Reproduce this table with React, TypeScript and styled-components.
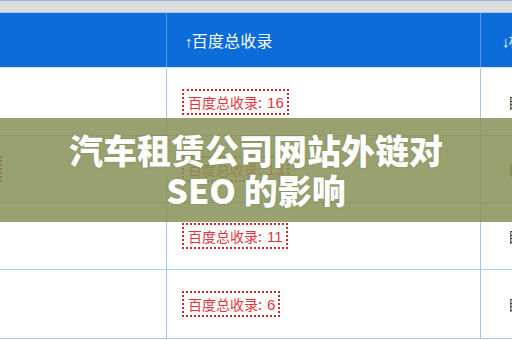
import React from 'react';
import styled, { createGlobalStyle } from 'styled-components';

const GlobalStyle = createGlobalStyle`
  html, body {
    margin: 0;
    padding: 0;
    background: #ffffff;
  }
  body {
    font-family: "Noto Sans CJK SC", "Liberation Sans", sans-serif;
  }
`;

const Page = styled.div`
  position: relative;
  width: 512px;
  height: 340px;
  overflow: hidden;
  background: #ffffff;
`;

const TopBar = styled.div`
  height: 11px;
  background: #dcdcdc;
  border-top: 1px solid #93b1dc;
  border-bottom: 1px solid #a9c8ee;
`;

const Row = styled.div<{ header?: boolean; h: number }>`
  display: flex;
  height: ${({ h }) => h}px;
  box-sizing: border-box;
  background: ${({ header }) => (header ? '#0c6cd9' : '#ffffff')};
  border-bottom: 1px solid ${({ header }) => (header ? '#d3e3f6' : '#a9cbea')};
`;

const Cell = styled.div<{ w: number; header?: boolean; pad?: number; last?: boolean }>`
  flex: 0 0 ${({ w }) => w}px;
  display: flex;
  align-items: center;
  box-sizing: border-box;
  padding-left: ${({ pad }) => pad ?? 16}px;
  overflow: hidden;
  border-right: ${({ last, header }) =>
    last ? 'none' : `1px solid ${header ? '#5b98e3' : '#a6c5ea'}`};
`;

const HeadText = styled.span`
  color: #ffffff;
  font-size: 16px;
  white-space: nowrap;
  letter-spacing: 0.2px;
`;

const Arrow = styled.span`
  font-family: "Liberation Sans", sans-serif;
  font-size: 15px;
  margin-right: -1px;
`;

const CountBox = styled.div`
  display: inline-block;
  border: 2px dotted #d0262e;
  padding: 0 3px 0 4px;
  height: 22px;
  line-height: 22px;
  font-size: 14px;
  color: #e1353b;
  white-space: nowrap;
`;

const Num = styled.span`
  font-family: "Liberation Sans", sans-serif;
  font-size: 15px;
  margin-left: 1px;
`;

const EdgeBox = styled.div`
  width: 40px;
  height: 26px;
  margin-left: -54px;
  box-sizing: border-box;
  border: 2px dotted #d0262e;
`;

const SideText = styled.span`
  color: #333333;
  font-size: 14px;
  white-space: nowrap;
`;

const Overlay = styled.div`
  position: absolute;
  left: 0;
  right: 0;
  top: 118px;
  height: 104px;
  background: rgba(134, 145, 86, 0.85);
  display: flex;
  align-items: center;
  justify-content: center;
`;

const Title = styled.h1`
  margin: 0;
  color: #ffffff;
  font-family: "Noto Sans CJK SC", "Liberation Sans", sans-serif;
  font-weight: 900;
  font-size: 34px;
  line-height: 40px;
  text-align: center;
  text-shadow: 0 0 2px rgba(80, 85, 50, 0.35);
`;

const rows = [
  { count: 16, h: 68, edge: false },
  { count: 13, h: 67, edge: true },
  { count: 11, h: 67, edge: false },
  { count: 6, h: 69, edge: false },
];

export default function App() {
  return (
    <Page>
      <GlobalStyle />
      <TopBar />
      <Row header h={55}>
        <Cell header w={167} />
        <Cell header w={314} pad={18}>
          <HeadText>
            <Arrow>↑</Arrow>百度总收录
          </HeadText>
        </Cell>
        <Cell header w={200} pad={21} last>
          <HeadText>
            <Arrow>↓</Arrow>标签
          </HeadText>
        </Cell>
      </Row>
      {rows.map((r) => (
        <Row key={r.count} h={r.h}>
          <Cell w={167}>{r.edge && <EdgeBox />}</Cell>
          <Cell w={314} pad={15}>
            <CountBox>
              百度总收录:<Num> {r.count}</Num>
            </CountBox>
          </Cell>
          <Cell w={200} pad={27} last>
            <SideText>目录</SideText>
          </Cell>
        </Row>
      ))}
      <Overlay>
        <Title>
          汽车租赁公司网站外链对
          <br />
          SEO 的影响
        </Title>
      </Overlay>
    </Page>
  );
}
